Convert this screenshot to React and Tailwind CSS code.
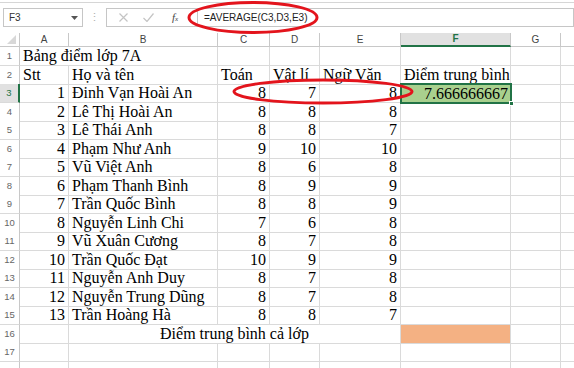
import React from "react";

const cols = "grid grid-cols-[20px_49px_149px_52px_50px_81px_110px_50px_13px]";
const line = "border-r border-b border-[#dadada]";

const students = [
  [1, "Đinh Vạn Hoài An", 8, 7, 8],
  [2, "Lê Thị Hoài An", 8, 8, 8],
  [3, "Lê Thái Anh", 8, 8, 7],
  [4, "Phạm Như Anh", 9, 10, 10],
  [5, "Vũ Việt Anh", 8, 6, 8],
  [6, "Phạm Thanh Bình", 8, 9, 9],
  [7, "Trần Quốc Bình", 8, 8, 9],
  [8, "Nguyễn Linh Chi", 7, 6, 8],
  [9, "Vũ Xuân Cương", 8, 7, 8],
  [10, "Trần Quốc Đạt", 10, 9, 9],
  [11, "Nguyễn Anh Duy", 8, 7, 8],
  [12, "Nguyễn Trung Dũng", 8, 7, 8],
  [13, "Trần Hoàng Hà", 8, 8, 7],
];

function RowNum({ n, active }) {
  return (
    <div
      className={`flex items-center justify-center font-['Liberation_Sans'] text-[9.5px] leading-none border-b border-[#dadada] ${
        active
          ? "bg-[#e1e1e1] text-[#217346] border-r-2 border-r-[#217346]"
          : "bg-white text-[#666] border-r border-r-[#c8c8c8]"
      }`}
    >
      {n}
    </div>
  );
}

function Cell({ children, align = "left", className = "" }) {
  const j = align === "right" ? "justify-end" : align === "center" ? "justify-center" : "justify-start";
  return (
    <div className={`${line} flex items-end px-[3px] whitespace-nowrap text-[16px] leading-[18px] ${j} ${className}`}>
      {children}
    </div>
  );
}

function Row({ n, children, active }) {
  return (
    <div className={`${cols} h-[18.5px]`}>
      <RowNum n={n} active={active} />
      {children}
    </div>
  );
}

function EmptyRow({ n }) {
  return (
    <Row n={n}>
      <Cell />
      <Cell />
      <Cell />
      <Cell />
      <Cell />
      <Cell />
      <Cell />
      <div className="border-b border-[#dadada]" />
    </Row>
  );
}

export default function App() {
  return (
    <div className="relative w-[574px] h-[368px] overflow-hidden bg-white text-black font-['Liberation_Serif',serif]">
      {/* formula bar */}
      <div className="h-[33px]">
        <div className="h-[3px] border-b border-[#d6d6d6]" />
        <div className="flex mt-[5px] h-[19px] font-['Liberation_Sans',sans-serif]">
          <div className="ml-[3px] w-[80px] border border-[#c6c6c6] flex items-center justify-between pl-[5px] pr-[4px] text-[10px] text-[#333]">
            <span>F3</span>
            <svg width="7" height="4" viewBox="0 0 7 4">
              <path d="M0 0h7L3.5 4z" fill="#555" />
            </svg>
          </div>
          <div className="w-[23px] flex items-center justify-center text-[11px] text-[#b0b0b0]">⋮</div>
          <div className="w-[92px] border border-[#c6c6c6] flex items-center pl-[12px] gap-[15px]">
            <svg width="9" height="9" viewBox="0 0 9 9">
              <path d="M0.5 0.5l8 8M8.5 0.5l-8 8" stroke="#c4c4c4" strokeWidth="1.2" />
            </svg>
            <svg width="11" height="9" viewBox="0 0 11 9">
              <path d="M0.5 5l3.5 3.5L10.5 0.5" stroke="#c4c4c4" strokeWidth="1.2" fill="none" />
            </svg>
            <span className="ml-[3px] font-['Liberation_Serif'] italic text-[11px] text-[#444] leading-none">
              f<span className="text-[7px]">x</span>
            </span>
          </div>
          <div className="flex-1 border border-l-0 border-[#c6c6c6] flex items-center pl-[6px] text-[10px] text-[#222]">
            =AVERAGE(C3,D3,E3)
          </div>
        </div>
      </div>

      {/* column headers */}
      <div className={`${cols} h-[14px] font-['Liberation_Sans',sans-serif] text-[10px] text-[#444] leading-none`}>
        <div className="relative border-r border-b border-[#c8c8c8]">
          <svg className="absolute right-[3px] bottom-[2px]" width="9" height="9" viewBox="0 0 9 9">
            <path d="M9 0v9H0z" fill="#d8d8d8" />
          </svg>
        </div>
        {["A", "B", "C", "D", "E"].map((c) => (
          <div key={c} className="flex items-center justify-center border-r border-b border-[#c8c8c8]">
            {c}
          </div>
        ))}
        <div className="flex items-center justify-center bg-[#e1e1e1] border-r border-[#c8c8c8] border-b-2 border-b-[#217346] text-[#217346] font-bold">
          F
        </div>
        <div className="flex items-center justify-center border-r border-b border-[#c8c8c8]">G</div>
        <div className="border-b border-[#c8c8c8]" />
      </div>

      {/* row 1 */}
      <Row n={1}>
        <Cell className="border-r-0 overflow-visible z-10">Bảng điểm lớp 7A</Cell>
        <Cell />
        <Cell />
        <Cell />
        <Cell />
        <Cell />
        <Cell />
        <div className="border-b border-[#dadada]" />
      </Row>

      {/* row 2 */}
      <Row n={2}>
        <Cell>Stt</Cell>
        <Cell>Họ và tên</Cell>
        <Cell>Toán</Cell>
        <Cell>Vật lí</Cell>
        <Cell>Ngữ Văn</Cell>
        <Cell>Điểm trung bình</Cell>
        <Cell />
        <div className="border-b border-[#dadada]" />
      </Row>

      {students.map(([stt, name, t, l, v], i) => (
        <Row key={stt} n={i + 3} active={i === 0}>
          <Cell align="right">{stt}</Cell>
          <Cell>{name}</Cell>
          <Cell align="right">{t}</Cell>
          <Cell align="right">{l}</Cell>
          <Cell align="right">{v}</Cell>
          {i === 0 ? (
            <div className="relative bg-[#a9d08e] flex items-end justify-end pr-[3px] text-[16px] leading-[18px]">
              7.666666667
              <div className="absolute -inset-[1px] border-2 border-[#217346]" />
              <div className="absolute -right-[3px] -bottom-[3px] w-[5px] h-[5px] bg-[#217346] border border-white" />
            </div>
          ) : (
            <Cell />
          )}
          <Cell />
          <div className="border-b border-[#dadada]" />
        </Row>
      ))}

      {/* row 16 */}
      <Row n={16}>
        <Cell />
        <Cell align="center" className="col-span-4">
          Điểm trung bình cả lớp
        </Cell>
        <div className="bg-[#f4b183] border-b border-r border-[#dadada]" />
        <Cell />
        <div className="border-b border-[#dadada]" />
      </Row>

      <EmptyRow n={17} />
      <EmptyRow n="" />

      {/* red annotation ellipses */}
      <svg className="absolute inset-0 pointer-events-none" width="574" height="368" viewBox="0 0 574 368">
        <ellipse cx="253" cy="17.5" rx="64" ry="15" fill="none" stroke="#e3141c" strokeWidth="3" />
        <ellipse cx="323" cy="91.5" rx="89" ry="11.5" fill="none" stroke="#e3141c" strokeWidth="3" />
      </svg>
    </div>
  );
}
